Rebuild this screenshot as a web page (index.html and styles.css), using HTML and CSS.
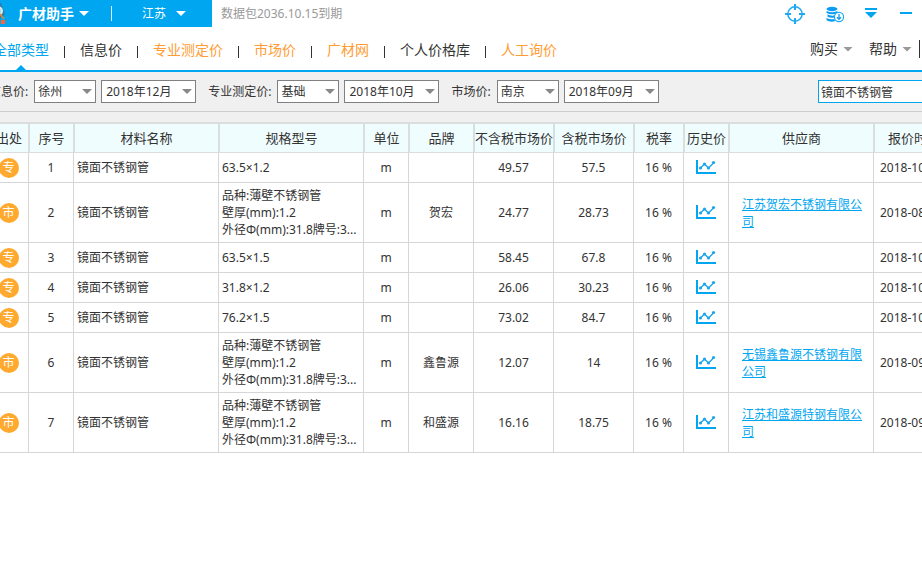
FILE: index.html
```html
<!DOCTYPE html>
<html lang="zh-CN">
<head>
<meta charset="utf-8">
<title>广材助手</title>
<link rel="stylesheet" href="styles.css">
</head>
<body>
<div class="shell">
  <header class="topbar">
    <div class="brand">
      <svg class="logo" width="22" height="27" viewBox="0 0 22 27" aria-hidden="true">
        <path d="M11 3h1l4 11-3 4h-2z" fill="#2b7fae"/>
        <circle cx="9" cy="11" r="4" fill="#9bdcf5" stroke="#dce9ee" stroke-width="2"/>
        <path d="M11 14l4 5" stroke="#c98a4b" stroke-width="2"/>
        <path d="M6 19h5v5H6z" fill="#7a2f22"/>
        <path d="M12 20h4v4h-4z" fill="#f4683c"/>
      </svg>
      <button class="brand-name" type="button">广材助手<span class="caret"></span></button>
      <span class="brand-line"></span>
      <button class="region" type="button">江苏<span class="caret"></span></button>
    </div>
    <span class="expiry">数据包2036.10.15到期</span>
    <div class="window-tools">
      <button type="button" aria-label="定位">
        <svg width="20" height="20" viewBox="0 0 20 20" fill="none" stroke="#1eaaf0" stroke-width="1.5"><circle cx="10" cy="10" r="7.2"/><path d="M10 0v6M10 14v6M0 10h6M14 10h6" stroke-width="2"/></svg>
      </button>
      <button type="button" aria-label="数据下载">
        <svg width="20" height="20" viewBox="0 0 20 20"><g fill="#0a9bf5"><ellipse cx="7" cy="5" rx="5.5" ry="2.2"/><path d="M1.500 7q5.500 2.600 11 0v2q-5.500 2.600-11 0zM2.500 10.500q4.500 2 8 .5l-1 2.500q-4 .8-7-.8zM1.500 14q4 2 8 1l.5 2.300q-5 1.200-8.500-1z"/></g><circle cx="14" cy="13" r="4.600" fill="#fff" stroke="#1eaaf0" stroke-width="1.200"/><path d="M14 10v5M12 13.300l2 2 2-2" fill="none" stroke="#0a9bf5" stroke-width="1.300"/></svg>
      </button>
      <button type="button" aria-label="菜单">
        <svg width="14" height="20" viewBox="0 0 14 20" fill="#00a6f0"><path d="M0 4h12v2H0zM0 8h12l-6 6z"/></svg>
      </button>
      <button type="button" aria-label="最小化">
        <svg width="14" height="20" viewBox="0 0 14 20" fill="#00a6f0"><path d="M1 8h12v2H1z"/></svg>
      </button>
    </div>
  </header>

  <nav class="tabs">
    <a class="active" href="#all">全部类型</a>
    <a href="#info">信息价</a>
    <a class="warm" href="#pro">专业测定价</a>
    <a class="warm" href="#market">市场价</a>
    <a class="warm" href="#net">广材网</a>
    <a href="#mine">个人价格库</a>
    <a class="warm" href="#ask">人工询价</a>
    <div class="tab-tools">
      <button type="button">购买<span class="caret"></span></button>
      <button type="button">帮助<span class="caret"></span></button>
      <span class="tool-line"></span>
    </div>
  </nav>

  <form class="filters">
    <div class="filter">
      <label for="info-city">信息价:</label>
      <span class="pick"><select id="info-city"><option>徐州</option></select></span>
      <span class="pick month"><select aria-label="信息价月份"><option>2018年12月</option></select></span>
    </div>
    <div class="filter">
      <label for="pro-kind">专业测定价:</label>
      <span class="pick"><select id="pro-kind"><option>基础</option></select></span>
      <span class="pick month"><select aria-label="专业测定价月份"><option>2018年10月</option></select></span>
    </div>
    <div class="filter">
      <label for="market-city">市场价:</label>
      <span class="pick"><select id="market-city"><option>南京</option></select></span>
      <span class="pick month"><select aria-label="市场价月份"><option>2018年09月</option></select></span>
    </div>
    <input class="search" type="text" aria-label="搜索材料" value="镜面不锈钢管">
  </form>

  <svg class="symbols" aria-hidden="true">
    <symbol id="trend" viewBox="0 0 20 16">
      <path d="M0 0h2v12h18v2H0z" fill="#00a6f0"/>
      <path d="M4.500 8l4-4 4 4 5.500-5.500" fill="none" stroke="#1da5ec" stroke-width="1.400"/>
      <g fill="#1da5ec"><circle cx="4.500" cy="8" r="1.600"/><circle cx="8.500" cy="4" r="1.600"/><circle cx="12.500" cy="8" r="1.600"/><circle cx="17.500" cy="2.500" r="1.600"/></g>
    </symbol>
  </svg>

  <div class="results">
  <table>
    <colgroup>
      <col class="w-source"><col class="w-small"><col class="w-large"><col class="w-large"><col class="w-small"><col class="w-brand"><col class="w-price"><col class="w-price"><col class="w-rate"><col class="w-small"><col class="w-large"><col class="w-price">
    </colgroup>
    <thead>
      <tr><th>出处</th><th>序号</th><th>材料名称</th><th>规格型号</th><th>单位</th><th>品牌</th><th>不含税市场价</th><th>含税市场价</th><th>税率</th><th>历史价</th><th>供应商</th><th>报价时间</th></tr>
    </thead>
    <tbody>
      <tr><td><span class="badge">专</span></td><td>1</td><td class="text">镜面不锈钢管</td><td class="text">63.5×1.2</td><td>m</td><td></td><td>49.57</td><td>57.5</td><td>16 %</td><td><svg class="trend"><use href="#trend"/></svg></td><td class="supplier"></td><td class="date">2018-10</td></tr>
      <tr class="tall"><td><span class="badge">市</span></td><td>2</td><td class="text">镜面不锈钢管</td><td class="text">品种:薄壁不锈钢管<br>壁厚(mm):1.2<br>外径Φ(mm):31.8牌号:3...</td><td>m</td><td>贺宏</td><td>24.77</td><td>28.73</td><td>16 %</td><td><svg class="trend"><use href="#trend"/></svg></td><td class="supplier"><a href="#s2">江苏贺宏不锈钢有限公司</a></td><td class="date">2018-08</td></tr>
      <tr><td><span class="badge">专</span></td><td>3</td><td class="text">镜面不锈钢管</td><td class="text">63.5×1.5</td><td>m</td><td></td><td>58.45</td><td>67.8</td><td>16 %</td><td><svg class="trend"><use href="#trend"/></svg></td><td class="supplier"></td><td class="date">2018-10</td></tr>
      <tr><td><span class="badge">专</span></td><td>4</td><td class="text">镜面不锈钢管</td><td class="text">31.8×1.2</td><td>m</td><td></td><td>26.06</td><td>30.23</td><td>16 %</td><td><svg class="trend"><use href="#trend"/></svg></td><td class="supplier"></td><td class="date">2018-10</td></tr>
      <tr><td><span class="badge">专</span></td><td>5</td><td class="text">镜面不锈钢管</td><td class="text">76.2×1.5</td><td>m</td><td></td><td>73.02</td><td>84.7</td><td>16 %</td><td><svg class="trend"><use href="#trend"/></svg></td><td class="supplier"></td><td class="date">2018-10</td></tr>
      <tr class="tall"><td><span class="badge">市</span></td><td>6</td><td class="text">镜面不锈钢管</td><td class="text">品种:薄壁不锈钢管<br>壁厚(mm):1.2<br>外径Φ(mm):31.8牌号:3...</td><td>m</td><td>鑫鲁源</td><td>12.07</td><td>14</td><td>16 %</td><td><svg class="trend"><use href="#trend"/></svg></td><td class="supplier"><a href="#s6">无锡鑫鲁源不锈钢有限公司</a></td><td class="date">2018-09</td></tr>
      <tr class="tall"><td><span class="badge">市</span></td><td>7</td><td class="text">镜面不锈钢管</td><td class="text">品种:薄壁不锈钢管<br>壁厚(mm):1.2<br>外径Φ(mm):31.8牌号:3...</td><td>m</td><td>和盛源</td><td>16.16</td><td>18.75</td><td>16 %</td><td><svg class="trend"><use href="#trend"/></svg></td><td class="supplier"><a href="#s7">江苏和盛源特钢有限公司</a></td><td class="date">2018-09</td></tr>
    </tbody>
  </table>
  </div>
</div>
</body>
</html>
```

FILE: styles.css
```css
* { box-sizing: border-box; }

body {
  margin: 0;
  overflow: hidden;
  background: #fff;
  color: #333;
  font: 12px/17px "Noto Sans", "Noto Sans CJK SC", sans-serif;
}

button, select, input {
  margin: 0;
  padding: 0;
  border: 0;
  background: none;
  color: inherit;
  font: inherit;
}

a { color: inherit; text-decoration: none; }

/* The panel is wider than the window and bleeds off both sides. */
.shell {
  width: calc(100% + 43px);
  margin-left: -11px;
}

.caret {
  display: inline-block;
  width: 10px;
  height: 5px;
  margin-left: 5px;
  background: currentColor;
  clip-path: polygon(0 0, 100% 0, 50% 100%);
}

/* Title bar */
.topbar { display: flex; height: 27px; }

.brand {
  display: flex;
  align-items: center;
  width: 223px;
  background: #00a6f0;
  color: #fff;
}

.logo { flex: none; }

.brand button { display: flex; align-items: center; white-space: nowrap; }
.brand-name { margin-left: 7px; }
.brand .brand-name { font-size: 14px; font-weight: 700; }
.brand-line { width: 1px; height: 15px; margin: 0 30px 0 22px; background: #d8f1fd; }
.region .caret { margin-left: 10px; }
.expiry { align-self: center; margin-left: 9px; color: #999; }

.window-tools {
  display: flex;
  align-items: center;
  gap: 20px;
  margin-left: auto;
  padding-right: 41px;
}
.window-tools button, .window-tools svg { display: block; }

/* Price source tabs */
.tabs {
  display: flex;
  align-items: center;
  height: 45px;
  padding-left: 4px;
  border-bottom: 2px solid #00a6f0;
  font-size: 14px;
  line-height: 20px;
  white-space: nowrap;
}

.tabs a { position: relative; display: flex; align-items: center; height: 43px; padding-top: 2px; }

.tabs a + a::before {
  content: "";
  width: 1px;
  height: 12px;
  margin: 5px 15px 0;
  background: #333;
}

.tabs .active { color: #00a6f0; }
.tabs .warm { color: #ff9c33; }

.tabs .active::after {
  content: "";
  position: absolute;
  bottom: 0;
  left: 50%;
  border: 5px solid transparent;
  border-top: 0;
  border-bottom-color: #00a6f0;
  transform: translateX(-50%);
}

.tab-tools { display: flex; align-items: center; margin-left: auto; padding: 1px 34px 0 0; }
.tab-tools button { display: flex; align-items: center; margin-right: 16px; }
.tab-tools button:nth-child(2) { margin-right: 7px; }
.tab-tools .caret { background: #999; }
.tool-line { width: 1px; height: 18px; background: #333; }

/* Filter bar */
.filters {
  display: flex;
  align-items: center;
  gap: 12px;
  height: 40px;
  border-bottom: 1px solid #ccc;
  background: #f0f0f0;
}

.filter { display: flex; align-items: center; gap: 5px; white-space: nowrap; }
.filter label { margin-right: 1px; }

.pick { position: relative; display: block; }

.pick select {
  display: block;
  width: 62px;
  height: 23px;
  padding-left: 3px;
  border: 1px solid #808080;
  border-radius: 0;
  background: #fff;
  appearance: none;
}

.month select { width: 95px; padding-left: 4px; }

.pick::after {
  content: "";
  position: absolute;
  top: 9px;
  right: 4px;
  border: 5px solid transparent;
  border-top-color: #888;
  border-bottom: 0;
  pointer-events: none;
}

.search {
  width: 136px;
  height: 23px;
  margin-left: auto;
  padding-left: 2px;
  border: 1px solid #00a6f0;
  background: #fff;
}

.symbols { display: none; }

/* Results */
.results { padding-top: 10px; background: #f0f0f0; }

table {
  width: 100%;
  border-collapse: separate;
  border-spacing: 0;
  table-layout: fixed;
  background: #fff;
}

.w-source { width: 40px; }
.w-small { width: 45px; }
.w-large { width: 145px; }
.w-brand { width: 65px; }
.w-price { width: 80px; }
.w-rate { width: 50px; }

th {
  height: 31px;
  padding: 0;
  border: 1px solid #dadede;
  border-top-width: 2px;
  background: #f0fdff;
  font-size: 13px;
  font-weight: 400;
  white-space: nowrap;
}

td {
  height: 30px;
  padding: 0;
  border-right: 1px solid #d6d6d6;
  border-bottom: 1px solid #d6d6d6;
  text-align: center;
}

.tall td { height: 60px; }

td.text { padding-left: 3px; text-align: left; white-space: nowrap; }
td.supplier { padding: 0 11px 0 13px; text-align: left; }
td.date { padding-left: 6px; text-align: left; }
.supplier a { color: #00a6f0; text-decoration: underline; }

.badge {
  display: block;
  width: 20px;
  height: 20px;
  margin: 0 auto;
  border-radius: 50%;
  background: #ffa92e;
  color: #fff;
  line-height: 20px;
}

.trend { display: block; width: 20px; height: 16px; margin: 0 auto; }
```
